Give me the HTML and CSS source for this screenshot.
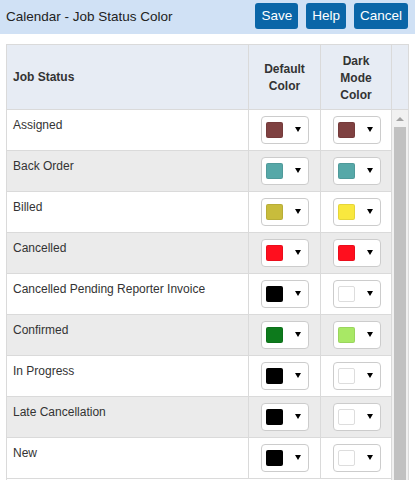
FILE: index.html
```html
<!DOCTYPE html>
<html>
<head>
<meta charset="utf-8">
<link rel="stylesheet" href="styles.css">
</head>
<body>
<div class="topbar">
  <div class="title">Calendar - Job Status Color</div>
  <div class="actions">
    <button class="btn">Save</button>
    <button class="btn">Help</button>
    <button class="btn">Cancel</button>
  </div>
</div>
<div class="table">
  <div class="thead">
    <div class="th th-name">Job Status</div>
    <div class="th th-center">Default<br>Color</div>
    <div class="th th-center">Dark<br>Mode<br>Color</div>
    <div class="th th-scroll"></div>
  </div>
  <div class="tbody">
    <div class="rows">
      <div class="row"><div class="name">Assigned</div><div class="pick"><div class="box"><span class="sw" style="background:#7f4141"></span><span class="caret"></span></div></div><div class="pick"><div class="box"><span class="sw" style="background:#7f4141"></span><span class="caret"></span></div></div></div>
      <div class="row alt"><div class="name">Back Order</div><div class="pick"><div class="box"><span class="sw" style="background:#56a8a8"></span><span class="caret"></span></div></div><div class="pick"><div class="box"><span class="sw" style="background:#56a8a8"></span><span class="caret"></span></div></div></div>
      <div class="row"><div class="name">Billed</div><div class="pick"><div class="box"><span class="sw" style="background:#c8bc3c"></span><span class="caret"></span></div></div><div class="pick"><div class="box"><span class="sw" style="background:#f9e83e"></span><span class="caret"></span></div></div></div>
      <div class="row alt"><div class="name">Cancelled</div><div class="pick"><div class="box"><span class="sw" style="background:#ff0f1e"></span><span class="caret"></span></div></div><div class="pick"><div class="box"><span class="sw" style="background:#ff0f1e"></span><span class="caret"></span></div></div></div>
      <div class="row"><div class="name">Cancelled Pending Reporter Invoice</div><div class="pick"><div class="box"><span class="sw" style="background:#000000"></span><span class="caret"></span></div></div><div class="pick"><div class="box"><span class="sw sw-light" style="background:#ffffff"></span><span class="caret"></span></div></div></div>
      <div class="row alt"><div class="name">Confirmed</div><div class="pick"><div class="box"><span class="sw" style="background:#0d7a1c"></span><span class="caret"></span></div></div><div class="pick"><div class="box"><span class="sw" style="background:#a8e865"></span><span class="caret"></span></div></div></div>
      <div class="row"><div class="name">In Progress</div><div class="pick"><div class="box"><span class="sw" style="background:#000000"></span><span class="caret"></span></div></div><div class="pick"><div class="box"><span class="sw sw-light" style="background:#ffffff"></span><span class="caret"></span></div></div></div>
      <div class="row alt"><div class="name">Late Cancellation</div><div class="pick"><div class="box"><span class="sw" style="background:#000000"></span><span class="caret"></span></div></div><div class="pick"><div class="box"><span class="sw sw-light" style="background:#ffffff"></span><span class="caret"></span></div></div></div>
      <div class="row"><div class="name">New</div><div class="pick"><div class="box"><span class="sw" style="background:#000000"></span><span class="caret"></span></div></div><div class="pick"><div class="box"><span class="sw sw-light" style="background:#ffffff"></span><span class="caret"></span></div></div></div>
    </div>
    <div class="scrollbar">
      <div class="sb-up"><span class="sb-arrow"></span></div>
      <div class="sb-thumb"></div>
    </div>
  </div>
</div>
</body>
</html>
```
FILE: styles.css
```css
* { box-sizing: border-box; }
html, body {
  margin: 0;
  padding: 0;
  height: 480px;
  overflow: hidden;
  background: #ffffff;
  font-family: "Liberation Sans", Arial, sans-serif;
  color: #333333;
}
body {
  display: flex;
  flex-direction: column;
}
.topbar {
  height: 34px;
  flex: none;
  background: #d0e1f5;
  display: flex;
  align-items: center;
  justify-content: space-between;
  padding: 0 7px 2px 6px;
}
.title {
  font-size: 13.5px;
  color: #222222;
}
.actions {
  display: flex;
  gap: 8px;
}
.btn {
  height: 26px;
  padding: 0 6px;
  border: none;
  border-radius: 3px;
  background: #0a66a8;
  color: #ffffff;
  font-family: "Liberation Sans", Arial, sans-serif;
  font-size: 13.5px;
  line-height: 26px;
}
.table {
  flex: 1;
  min-height: 0;
  margin: 10px 6px 0 6px;
  border: 1px solid #dadada;
  border-bottom: none;
  display: flex;
  flex-direction: column;
}
.thead {
  display: grid;
  grid-template-columns: 242px 72px 71px 1fr;
  height: 65px;
  background: #e7ecf4;
  border-bottom: 1px solid #dadada;
  flex: none;
}
.th {
  border-right: 1px solid #dadada;
  font-size: 12px;
  font-weight: bold;
  color: #333333;
  line-height: 17px;
  display: flex;
  align-items: center;
}
.th-name { padding-left: 6px; }
.th-center { justify-content: center; text-align: center; padding-top: 2px; }
.th-scroll { border-right: none; }
.tbody {
  flex: 1;
  min-height: 0;
  display: flex;
  overflow: hidden;
}
.rows {
  width: 385px;
  flex: none;
  border-right: 1px solid #dadada;
}
.row {
  display: grid;
  grid-template-columns: 242px 72px 70px;
  height: 41px;
  border-bottom: 1px solid #dadada;
  background: #ffffff;
}
.row.alt { background: #ebebeb; }
.name {
  border-right: 1px solid #dadada;
  padding: 8px 6px 0 6px;
  font-size: 12px;
  line-height: 14px;
  color: #333333;
}
.pick {
  display: flex;
  justify-content: center;
  padding-top: 6px;
}
.row .pick:nth-child(2) { border-right: 1px solid #dadada; padding-left: 1px; }
.row .pick:nth-child(3) { padding-left: 1px; }
.box {
  width: 48px;
  height: 28px;
  border: 1px solid #cccccc;
  border-radius: 4px;
  background: #ffffff;
  display: flex;
  align-items: center;
  padding-left: 4px;
  gap: 12px;
}
.sw {
  width: 17px;
  height: 16px;
  border-radius: 2px;
  border: 1px solid rgba(0, 0, 0, 0.08);
}
.sw-light { border-color: #dddddd; }
.caret {
  width: 0;
  height: 0;
  border-left: 3.5px solid transparent;
  border-right: 3.5px solid transparent;
  border-top: 5px solid #000000;
  margin-top: -1px;
}
.scrollbar {
  flex: 1;
  background: #f1f1f1;
  display: flex;
  flex-direction: column;
  padding: 0 2px;
}
.sb-up {
  height: 17px;
  flex: none;
  display: flex;
  justify-content: center;
  align-items: center;
}
.sb-arrow {
  width: 0;
  height: 0;
  border-left: 4px solid transparent;
  border-right: 4px solid transparent;
  border-bottom: 4px solid #a3a3a3;
}
.sb-thumb {
  flex: 1;
  background: #c1c1c1;
}
```
